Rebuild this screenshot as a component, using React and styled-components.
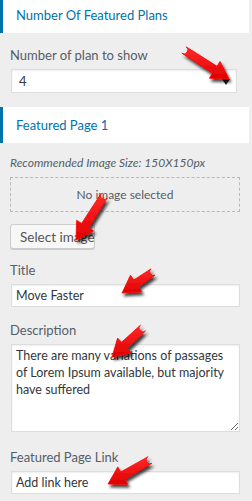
import React from 'react';
import styled, { createGlobalStyle } from 'styled-components';

const Global = createGlobalStyle`
  html, body { margin: 0; padding: 0; background: #eee; }
  body { font-family: Lato, "Noto Sans", sans-serif; }
  * { box-sizing: border-box; }
`;

const Page = styled.div`
  position: relative;
  width: 252px;
  height: 501px;
  overflow: hidden;
  background: #eee;
`;

const Stack = styled.div`
  display: flex;
  flex-direction: column;
  margin-top: -3px;
`;

const SectionHeader = styled.h3`
  margin: 0 3px 0 0;
  height: 36px;
  background: #fff;
  border-left: 3px solid #0073aa;
  padding-left: 13px;
  display: flex;
  align-items: center;
  font-size: 13px;
  font-weight: 400;
  color: #0073aa;
`;

const Section = styled.div`
  display: flex;
  flex-direction: column;
  align-items: flex-start;
  padding: ${p => p.$top}px 12px ${p => p.$bottom}px 10px;
`;

const Label = styled.label`
  display: block;
  font-size: 13px;
  line-height: 18px;
  color: #555d66;
  margin: ${p => p.$mt || 0}px 0 5px 0;
`;

const Note = styled.div`
  font-size: 12px;
  line-height: 16px;
  font-style: italic;
  color: #555d66;
`;

const SelectBox = styled.div`
  position: relative;
  margin-left: 1px;
  width: 226px;
  height: 24px;
  background: #fff;
  border: 1px solid #ddd;
  box-shadow: inset 0 1px 2px rgba(0,0,0,.07);
  font-size: 13px;
  color: #32373c;
  display: flex;
  align-items: center;
  padding: 0 6px 0 7px;
  justify-content: space-between;
`;

const Caret = styled.span`
  width: 0;
  height: 0;
  border-left: 4px solid transparent;
  border-right: 4px solid transparent;
  border-top: 6px solid #222;
  margin-top: 2px;
`;

const DropZone = styled.div`
  width: 230px;
  height: 35px;
  margin-top: 6px;
  border: 1px dashed #b4b9be;
  display: flex;
  align-items: center;
  justify-content: center;
  font-size: 12px;
  color: #555d66;
`;

const Button = styled.button`
  margin-top: 12px;
  height: 25px;
  width: 85px;
  padding: 0 9px;
  background: #f7f7f7;
  border: 1px solid #ccc;
  border-radius: 3px;
  box-shadow: 0 1px 0 #ccc;
  font-family: inherit;
  font-size: 13.5px;
  color: #555;
  text-align: left;
  white-space: nowrap;
`;

const TextInput = styled.div`
  margin-left: 1px;
  width: 229px;
  height: 23px;
  background: #fff;
  border: 1px solid #ddd;
  box-shadow: inset 0 1px 2px rgba(0,0,0,.07);
  padding: 0 4px;
  display: flex;
  align-items: center;
  font-size: 12.5px;
  color: #32373c;
`;

const TextArea = styled.textarea`
  margin: 0 0 0 1px;
  width: 229px;
  height: 88px;
  background: #fff;
  border: 1px solid #ddd;
  box-shadow: inset 0 1px 2px rgba(0,0,0,.07);
  padding: 2px 4px;
  font-family: inherit;
  font-size: 12.5px;
  line-height: 17px;
  color: #32373c;
  overflow: hidden;
  display: block;
`;

const Overlay = styled.svg`
  position: absolute;
  left: 0;
  top: 0;
  pointer-events: none;
`;

const arrows = [
  [184, 50, 229, 79],
  [104, 196, 76, 240],
  [153, 272, 122, 293],
  [143, 328, 112, 357],
  [150, 460, 108, 484],
];

function arrowPath([x1, y1, x2, y2]) {
  const dx = x2 - x1, dy = y2 - y1;
  const len = Math.hypot(dx, dy);
  const ux = dx / len, uy = dy / len;
  const nx = -uy, ny = ux;
  const headLen = 17, headHalf = 10, tailHalf = 3.8, neckHalf = 4.2;
  const bx = x2 - ux * headLen, by = y2 - uy * headLen;
  const p = (x, y) => `${x.toFixed(1)} ${y.toFixed(1)}`;
  return [
    `M ${p(x1 + nx * tailHalf, y1 + ny * tailHalf)}`,
    `L ${p(bx + nx * neckHalf, by + ny * neckHalf)}`,
    `L ${p(bx + nx * headHalf, by + ny * headHalf)}`,
    `L ${p(x2, y2)}`,
    `L ${p(bx - nx * headHalf, by - ny * headHalf)}`,
    `L ${p(bx - nx * neckHalf, by - ny * neckHalf)}`,
    `L ${p(x1 - nx * tailHalf, y1 - ny * tailHalf)}`,
    `A ${tailHalf} ${tailHalf} 0 0 1 ${p(x1 + nx * tailHalf, y1 + ny * tailHalf)}`,
    'Z',
  ].join(' ');
}

function Arrows() {
  return (
    <Overlay width="252" height="501" viewBox="0 0 252 501">
      <defs>
        <filter id="sh" x="-50%" y="-50%" width="200%" height="200%">
          <feGaussianBlur in="SourceAlpha" stdDeviation="1.6" />
          <feOffset dx="2" dy="3" result="b" />
          <feComponentTransfer><feFuncA type="linear" slope="0.75" /></feComponentTransfer>
          <feMerge>
            <feMergeNode />
            <feMergeNode in="SourceGraphic" />
          </feMerge>
        </filter>
        <linearGradient id="rg" x1="0" y1="0" x2="0" y2="1">
          <stop offset="0" stopColor="#ff2a2a" />
          <stop offset="1" stopColor="#e00000" />
        </linearGradient>
      </defs>
      {arrows.map((a, i) => (
        <path key={i} d={arrowPath(a)} fill="url(#rg)" filter="url(#sh)" strokeLinejoin="round" stroke="#f00" strokeWidth="0.8" />
      ))}
    </Overlay>
  );
}

export default function App() {
  return (
    <Page>
      <Global />
      <Stack>
        <SectionHeader>Number Of Featured Plans</SectionHeader>
        <Section $top={13} $bottom={14}>
          <Label>Number of plan to show</Label>
          <SelectBox>
            <span>4</span>
            <Caret />
          </SelectBox>
        </Section>
        <SectionHeader>Featured Page 1</SectionHeader>
        <Section $top={12} $bottom={10}>
          <Note>Recommended Image Size: 150X150px</Note>
          <DropZone>No image selected</DropZone>
          <Button type="button">Select image</Button>
          <Label $mt={12}>Title</Label>
          <TextInput>Move Faster</TextInput>
          <Label $mt={14}>Description</Label>
          <TextArea readOnly defaultValue="There are many variations of passages of Lorem Ipsum available, but majority have suffered" />
          <Label $mt={16}>Featured Page Link</Label>
          <TextInput>Add link here</TextInput>
        </Section>
      </Stack>
      <Arrows />
    </Page>
  );
}
